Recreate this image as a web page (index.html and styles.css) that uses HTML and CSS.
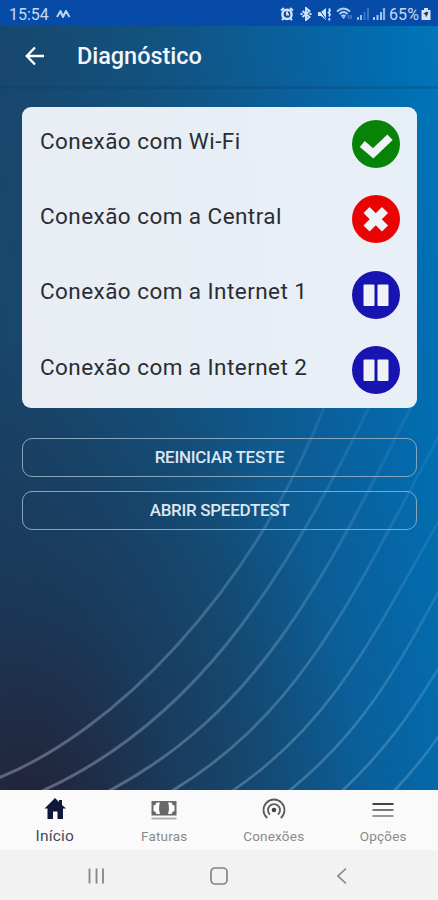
FILE: index.html
```html
<!DOCTYPE html>
<html lang="pt-BR">
<head>
    <meta charset="UTF-8" />
    <meta name="viewport" content="width=device-width, initial-scale=1.0"/>
    <title>Diagnóstico</title>
    <link rel="stylesheet" href="styles.css">
</head>
<body>
    <svg class="waves" viewBox="0 0 438 790" aria-hidden="true">
        <defs>
            <linearGradient id="fade" gradientUnits="userSpaceOnUse" x1="40" y1="790" x2="370" y2="430">
                <stop offset="0" stop-color="#a9b5cb" stop-opacity="0.44"/>
                <stop offset="0.5" stop-color="#8fc0e0" stop-opacity="0.31"/>
                <stop offset="1" stop-color="#8fc8ee" stop-opacity="0.1"/>
            </linearGradient>
        </defs>
        <g fill="none" stroke="url(#fade)">
            <path stroke-width="3" d="M-4 779C115 732 252 592 325 405"/>
            <path stroke-width="3" d="M42 791C190 724 281 590 370 405"/>
            <path stroke-width="3" d="M109 791C253 714 319 592 412 405"/>
            <path stroke-width="2.8" d="M172 791C302 712 354 594 440 434"/>
            <path stroke-width="2.6" d="M232 791C332 724 374 634 440 519"/>
            <path stroke-width="2.6" d="M289 791C362 732 396 670 440 589"/>
            <path stroke-width="2.6" d="M342 791C384 752 412 712 440 666"/>
            <path stroke-width="2.6" d="M394 791C414 770 426 755 440 734"/>
        </g>
    </svg>

    <div class="status-bar">
        <div class="status-left">
            <span>15:54</span>
            <svg width="15" height="10" viewBox="0 0 15 10"><path d="M1 8L4.5 2L7 8L10 2L13.5 8" fill="none" stroke="#bcd3f5" stroke-width="2" stroke-linejoin="round"/></svg>
        </div>
        <div class="status-right">
            <svg width="14" height="14" viewBox="0 0 14 14"><circle cx="7" cy="7.4" r="4.6" fill="none" stroke="#d5e3fa" stroke-width="2.4"/><path d="M1 3.5L4 1M13 3.5L10 1M2 13L4 11M12 13L10 11M7 4.5V7.5H9" fill="none" stroke="#d5e3fa" stroke-width="2"/></svg>
            <svg class="bluetooth" width="12" height="14" viewBox="0 0 12 14"><path d="M2.5 4L9.5 10L6 13V1L9.5 4L2.5 10" fill="none" stroke="#d5e3fa" stroke-width="1.9"/><path d="M.5 7H2.5M9.5 7H11.5" stroke="#d5e3fa" stroke-width="2"/></svg>
            <svg class="muted" width="14" height="14" viewBox="0 0 14 14"><path d="M1 5H4L9 1V13L4 9H1Z" fill="#d5e3fa"/><path d="M1 1L9 12" stroke="#064ba8" stroke-width="1"/><path d="M12 1.5L13 3.5L11.5 5.5L13 7.5L12 9.5" fill="none" stroke="#d5e3fa" stroke-width="1.8"/><path d="M12.3 11V13.5" stroke="#d5e3fa" stroke-width="1.8"/></svg>
            <svg class="wifi" width="18" height="14" viewBox="0 0 18 14"><path d="M1 4.5Q7.5-1.5 14 4.5M3.5 7Q7.5 3 11.5 7M5.5 9.3Q7.5 7.3 9.5 9.3" fill="none" stroke="#b3cdf2" stroke-width="1.8"/><path d="M5.5 9.5L7.5 12L9.5 9.5Z" fill="#b3cdf2"/><path d="M12.5 8V12M15 8V12" stroke="#4f80c9" stroke-width="1.5"/></svg>
            <svg class="signal" width="14" height="14" viewBox="0 0 14 14"><path d="M2 10V13M5 8V13" stroke="#b5cef1" stroke-width="1.7"/><path d="M8.5 5V13M12 1V13" stroke="#3c73c3" stroke-width="2"/></svg>
            <svg class="signal" width="14" height="14" viewBox="0 0 14 14"><path d="M2 10V13M5.5 8V13M9 5V13" stroke="#b5cef1" stroke-width="1.9"/><path d="M12 1V13" stroke="#8eb2e5" stroke-width="2.2"/></svg>
            <span class="percent">65%</span>
            <svg class="battery" width="10" height="14" viewBox="0 0 10 14"><path d="M3 1H7V3H9.5V13H.5V3H3Z" fill="#d5e3fa"/><path d="M5 5C7 4 8 6 6.5 7.5L5 10.5L4.5 8L2.5 6.5Z" fill="#263d60"/></svg>
        </div>
    </div>

    <header class="header">
        <svg class="back" width="20" height="20" viewBox="0 0 20 20"><path d="M19 10H2M10 1.5L1.8 10L10 18.5" fill="none" stroke="#fff" stroke-width="2.4"/></svg>
        <h1>Diagnóstico</h1>
    </header>

    <main class="content">
        <div class="card">
            <div class="row">
                <span>Conexão com Wi-Fi</span>
                <svg class="state" viewBox="0 0 48 48"><circle cx="24" cy="24" r="24" fill="#078407"/><path d="M10.3 24L21.2 33.3L38 17.2" fill="none" stroke="#eff3f8" stroke-width="7.6"/></svg>
            </div>
            <div class="row">
                <span>Conexão com a Central</span>
                <svg class="state" viewBox="0 0 48 48"><circle cx="24" cy="24" r="24" fill="#ea0303"/><path d="M14.5 15L33 33.5M33 15L14.5 33.5" stroke="#eff3f8" stroke-width="8.6"/></svg>
            </div>
            <div class="row">
                <span>Conexão com a Internet 1</span>
                <svg class="state" viewBox="0 0 48 48"><circle cx="24" cy="24" r="24" fill="#1714b0"/><rect x="11.5" y="13.5" width="11" height="21.5" rx="1" fill="#eff3f8"/><rect x="25.5" y="13.5" width="11" height="21.5" rx="1" fill="#eff3f8"/></svg>
            </div>
            <div class="row">
                <span>Conexão com a Internet 2</span>
                <svg class="state" viewBox="0 0 48 48"><circle cx="24" cy="24" r="24" fill="#1714b0"/><rect x="11.5" y="13.5" width="11" height="21.5" rx="1" fill="#eff3f8"/><rect x="25.5" y="13.5" width="11" height="21.5" rx="1" fill="#eff3f8"/></svg>
            </div>
        </div>

        <button class="action">REINICIAR TESTE</button>
        <button class="action speed">ABRIR SPEEDTEST</button>
    </main>

    <nav class="tabs">
        <a class="tab active">
            <svg width="24" height="24" viewBox="0 0 24 24"><path d="M12 1L1.5 11.5H4.5V22H10V14.5H14.5V22H20V11.5H23L19 8V3H16V5Z" fill="#11163b"/></svg>
            <span>Início</span>
        </a>
        <a class="tab">
            <svg width="26" height="24" viewBox="0 0 26 24"><path d="M.5 4H25.5V18.5H.5Z" fill="#686868"/><path d="M9 5.5H5.5Q5 8 2.5 8.5V14Q5 14.5 5.5 17H9Q7 11 9 5.5M17 5.5H20.5Q21 8 23.5 8.5V14Q21 14.5 20.5 17H17Q19 11 17 5.5" fill="#fafafa"/><path d="M.5 21.5H25.5" stroke="#aaa" stroke-width="1.8"/></svg>
            <span>Faturas</span>
        </a>
        <a class="tab">
            <svg width="24" height="24" viewBox="0 0 24 24"><g fill="none" stroke="#5c5c5c" stroke-width="1.8"><path d="M5.2 21A10.5 10.5 0 1 1 18.8 21"/><path d="M8 17.6A6 6 0 1 1 16 17.6"/></g><circle cx="12" cy="13" r="2.3" fill="#444"/></svg>
            <span>Conexões</span>
        </a>
        <a class="tab">
            <svg width="24" height="24" viewBox="0 0 24 24"><path d="M1.5 7H22.5" stroke="#444" stroke-width="2"/><path d="M1.5 13H22.5" stroke="#777" stroke-width="2"/><path d="M1.5 19H22.5" stroke="#999" stroke-width="2"/></svg>
            <span>Opções</span>
        </a>
    </nav>

    <div class="system-nav">
        <svg width="18" height="18" viewBox="0 0 18 18"><path d="M2.5 1.5V16.5M9.5 1.5V16.5M16 1.5V16.5" stroke="#858585" stroke-width="1.8"/></svg>
        <svg width="18" height="18" viewBox="0 0 18 18"><rect x="1" y="1" width="16" height="16" rx="4" fill="none" stroke="#858585" stroke-width="1.7"/></svg>
        <svg width="18" height="18" viewBox="0 0 18 18"><path d="M13 1.5L5 9L13 16.5" fill="none" stroke="#858585" stroke-width="1.7"/></svg>
    </div>
</body>
</html>
```
FILE: styles.css
```css
* {
    box-sizing: border-box;
}

body {
    font-family: Roboto, sans-serif;
    margin: 0;
    height: 900px;
    display: flex;
    flex-direction: column;
    position: relative;
    overflow: hidden;
    background:
        radial-gradient(ellipse 330px 480px at 30px 820px, rgba(36, 28, 46, 0.85), rgba(31, 40, 64, 0.45) 45%, rgba(25, 55, 88, 0) 100%),
        linear-gradient(83deg, #1a4266 0%, #17486f 22%, #12527f 47%, #0962a0 74%, #006fb2 91%, #0076b9 100%);
}

svg {
    display: block;
    flex: none;
}

.waves {
    position: absolute;
    top: 0;
    left: 0;
    width: 438px;
    height: 790px;
    z-index: -1;
}

.status-bar {
    height: 26px;
    flex: none;
    background: #064ba8;
    color: #c6d9f6;
    display: flex;
    justify-content: space-between;
    align-items: center;
    padding: 2px 7px 0 9px;
    font-size: 16px;
}

.status-left,
.status-right {
    display: flex;
    align-items: center;
}

.status-left {
    gap: 7px;
}

.bluetooth {
    margin-left: 6px;
}

.muted {
    margin-left: 5px;
}

.wifi {
    margin-left: 5px;
}

.signal {
    margin-left: 2px;
}

.percent {
    margin-left: 3px;
    letter-spacing: 0.1px;
}

.battery {
    margin-left: 2px;
}

.header {
    height: 63px;
    flex: none;
    display: flex;
    align-items: center;
    padding: 0 0 1px 25px;
    border-bottom: 3px solid rgba(5, 60, 105, 0.25);
}

.header h1 {
    margin: 0 0 0 32px;
    font-size: 23.5px;
    font-weight: 500;
    letter-spacing: -0.05px;
    color: #f3f7fb;
}

.content {
    flex: 1;
    padding: 18px 21px 0 22px;
}

.card {
    height: 301px;
    border-radius: 9px;
    background: rgba(244, 247, 251, 0.95);
    padding: 13px 17.5px 0 18px;
}

.row {
    height: 75.4px;
    display: flex;
    justify-content: space-between;
    align-items: flex-start;
    color: #2a2d33;
    font-size: 22.5px;
    line-height: 26px;
    letter-spacing: 0.44px;
}

.row span {
    padding-top: 7.5px;
}

.state {
    width: 48px;
    height: 48px;
}

.action {
    display: block;
    width: 100%;
    height: 39px;
    margin-top: 30px;
    padding: 0 0 1px;
    border: 1px solid #86a6bd;
    border-radius: 10px;
    background: none;
    color: #dce6f1;
    font-family: Roboto, sans-serif;
    font-size: 17px;
    font-weight: 500;
    letter-spacing: -0.3px;
}

.speed {
    margin-top: 14px;
}

.tabs {
    height: 60px;
    flex: none;
    display: flex;
    background: #fafafa;
}

.tab {
    flex: 1;
    display: flex;
    flex-direction: column;
    align-items: center;
    padding-top: 7px;
    font-size: 13.5px;
    line-height: 16px;
    color: #8a8a8a;
    letter-spacing: 0.2px;
}

.tab span {
    padding-top: 7px;
}

.tab.active {
    font-size: 15.5px;
    color: #45485c;
}

.system-nav {
    height: 50px;
    flex: none;
    display: flex;
    justify-content: space-between;
    align-items: center;
    padding: 2px 87px 0 87px;
    background: #f2f2f2;
}
```
